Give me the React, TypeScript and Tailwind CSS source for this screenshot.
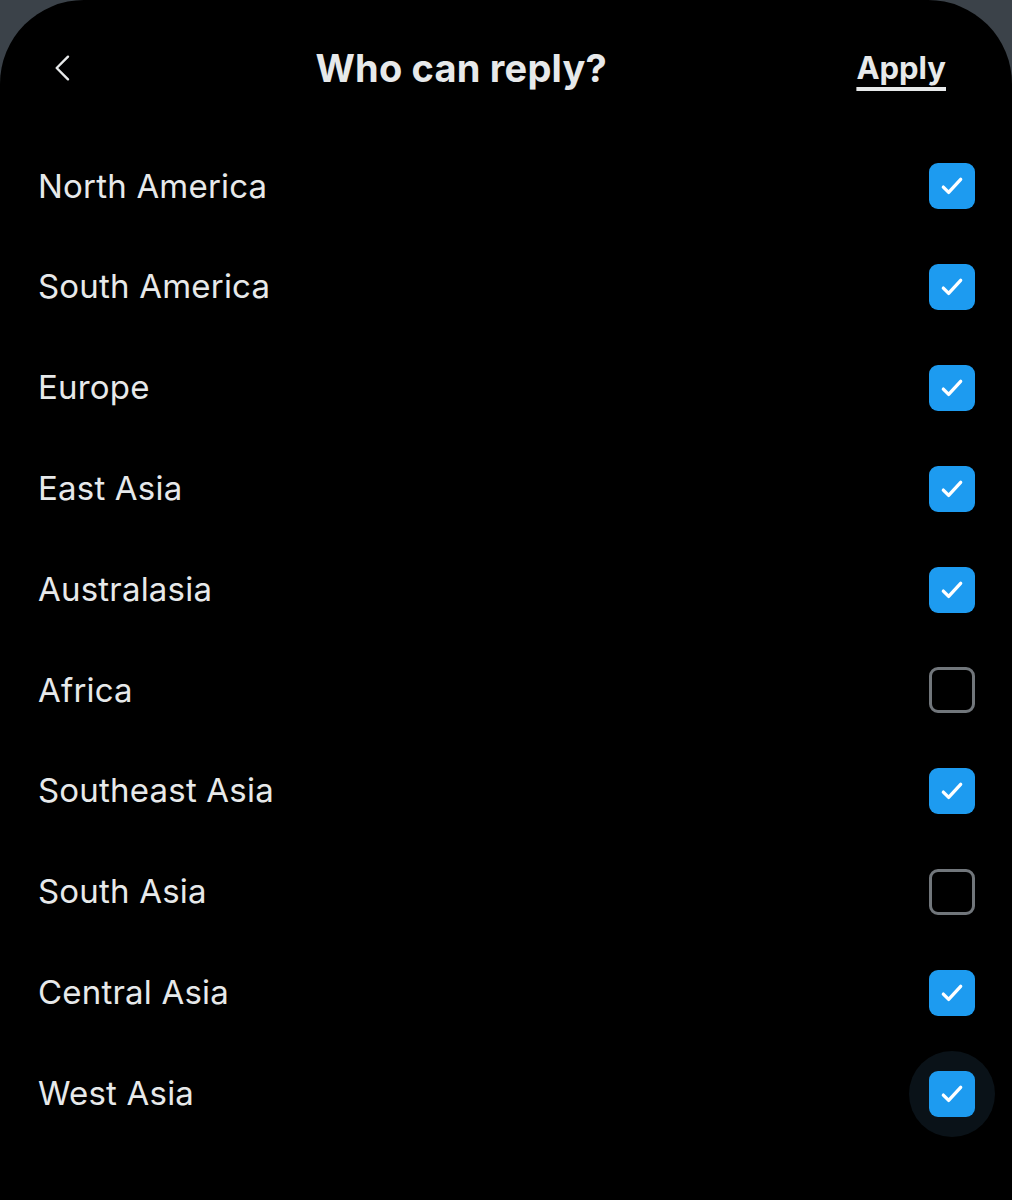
import React from 'react';

const regions: { name: string; checked: boolean }[] = [
  { name: 'North America', checked: true },
  { name: 'South America', checked: true },
  { name: 'Europe', checked: true },
  { name: 'East Asia', checked: true },
  { name: 'Australasia', checked: true },
  { name: 'Africa', checked: false },
  { name: 'Southeast Asia', checked: true },
  { name: 'South Asia', checked: false },
  { name: 'Central Asia', checked: true },
  { name: 'West Asia', checked: true },
];

const Checkbox = ({ checked }: { checked: boolean }) =>
  checked ? (
    <div className="flex h-[46px] w-[46px] items-center justify-center rounded-[9px] bg-[#1d9bf0]">
      <svg width="32" height="32" viewBox="0 0 24 24" fill="none">
        <path d="M5.5 12.8l4 4L18.5 7" stroke="#fff" strokeWidth="2.5" strokeLinecap="round" strokeLinejoin="round" />
      </svg>
    </div>
  ) : (
    <div className="h-[46px] w-[46px] rounded-[9px] border-[3px] border-[#71767b]" />
  );

export default function App() {
  return (
    <div className="h-[1200px] w-[1012px] overflow-hidden bg-[#3b4249]" style={{ fontFamily: 'Inter, Roboto, sans-serif' }}>
      <div className="h-full rounded-t-[84px] bg-black text-[#e7e9ea]">
        <div className="flex h-[136px] items-center pl-[48px] pr-[66px]">
          <button className="flex h-[34px] w-[34px] items-center">
            <svg width="32" height="32" viewBox="0 0 24 24" fill="none">
              <path d="M15 3.5L6.5 12l8.5 8.5" stroke="#e7e9ea" strokeWidth="1.8" strokeLinecap="round" strokeLinejoin="round" />
            </svg>
          </button>
          <div className="flex-1 pr-[16px] text-center text-[38px] font-bold tracking-[0.2px]">Who can reply?</div>
          <button className="text-[31px] font-bold underline decoration-[4px] underline-offset-[8px]">Apply</button>
        </div>
        <div className="flex flex-col">
          {regions.map((r, i) => (
            <div key={r.name} className="flex h-[100.8px] items-center justify-between pl-[38px] pr-[37px]">
              <span className="text-[33px] tracking-[0.2px]">{r.name}</span>
              {i === regions.length - 1 ? (
                <div className="-mr-[20px] flex h-[86px] w-[86px] items-center justify-center rounded-full bg-[#0a1218]">
                  <Checkbox checked={r.checked} />
                </div>
              ) : (
                <Checkbox checked={r.checked} />
              )}
            </div>
          ))}
        </div>
      </div>
    </div>
  );
}
